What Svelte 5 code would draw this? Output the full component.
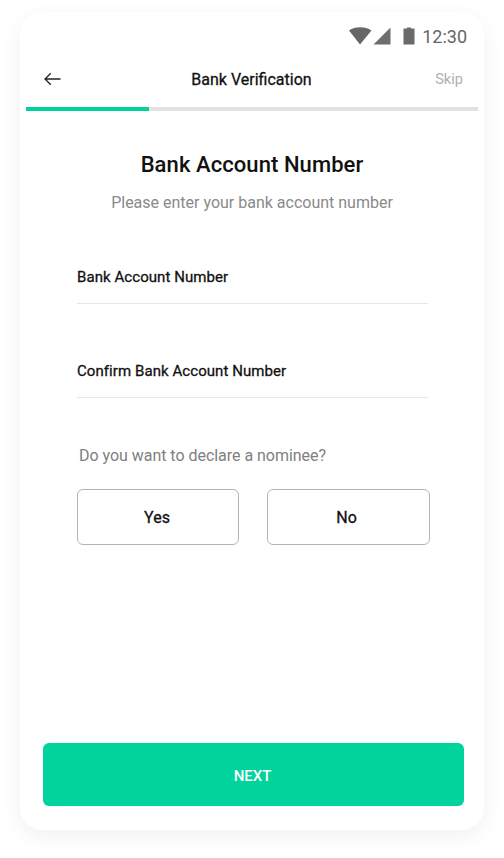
<script>
  const fields = ['Bank Account Number', 'Confirm Bank Account Number'];
</script>

<div class="page">
  <div class="card">
    <div class="status">
      <svg class="wifi" width="23" height="18" viewBox="0 0 23 18"><path d="M0 3.500C6-.7 16-.7 22.500 3.500L11 17.500Z" fill="#666"/></svg>
      <svg class="signal" width="18" height="18" viewBox="0 0 18 18"><path d="M0.5 17.500L17.500 .5V17.500Z" fill="#6e6e6e"/></svg>
      <svg class="battery" width="12" height="18" viewBox="0 0 12 18"><path d="M4 1.500V.5H8V1.500H11.500V17.500H.5V1.500Z" fill="#6a6a6a"/></svg>
      <span class="time">12:30</span>
    </div>
    <div class="nav">
      <svg class="back" width="17" height="14" viewBox="0 0 17 14"><path d="M16.500 7H1M6.800 1.200L1 7L6.800 12.800" fill="none" stroke="#222" stroke-width="1.300"/></svg>
      <span class="title">Bank Verification</span>
      <span class="skip">Skip</span>
    </div>
    <div class="track"><div class="fill"></div></div>
    <div class="body">
      <h1>Bank Account Number</h1>
      <p class="sub">Please enter your bank account number</p>
      {#each fields as f}
        <div class="field">{f}</div>
      {/each}
      <p class="q">Do you want to declare a nominee?</p>
      <div class="choices">
        <button class="yes">Yes</button>
        <button class="no">No</button>
      </div>
    </div>
    <button class="next">NEXT</button>
  </div>
</div>

<style>
  :global(body) { margin: 0; background: #fff; }
  .page {
    width: 504px; height: 858px; box-sizing: border-box; padding: 12px 20px 28px;
    font-family: Roboto, "Liberation Sans", sans-serif; overflow: hidden;
  }
  .card {
    height: 818px; box-sizing: border-box; background: #fff; border-radius: 22px;
    box-shadow: 0 6px 22px rgba(0,0,0,.06); display: flex; flex-direction: column;
    padding: 0 0 24px;
  }
  .status { display: flex; align-items: center; justify-content: flex-end; height: 48px; padding: 0 17px 0 0; box-sizing: border-box; }
  .wifi { margin-right: 1px; margin-top: -1px; }
  .signal { margin-right: 12px; margin-top: -1px; }
  .battery { margin-right: 7px; margin-top: -1px; }
  .time { font-size: 18px; color: #666; margin-top: 1px; }
  .nav { display: grid; grid-template-columns: 1fr auto 1fr; align-items: center; height: 38px; padding: 0 21px 0 20px; }
  .title { font-size: 16px; font-weight: 400; -webkit-text-stroke: .3px #111; color: #111; text-align: center; }
  .skip { font-size: 14.600px; color: #b0b0b0; justify-self: end; }
  .back { justify-self: start; margin-left: 4px; }
  .track { height: 4px; margin: 9px 6px 0; background: #e2e2e2; }
  .fill { width: 123px; height: 4px; background: #00d39b; }
  .body { flex: 1; display: flex; flex-direction: column; padding: 0 57px; }
  h1 { margin: 40px 0 0; font-size: 22px; line-height: 28px; font-weight: 500; color: #111; text-align: center; letter-spacing: .08px; white-space: nowrap; }
  .sub { margin: 13px 0 0; font-size: 16px; line-height: 22px; color: #8a8a8a; text-align: center; white-space: nowrap; }
  .field { font-size: 15px; line-height: 20px; font-weight: 400; -webkit-text-stroke: .3px #111; letter-spacing: .07px; color: #111; height: 36px; border-bottom: 1px solid #e6e6e6; margin-top: 57px; margin-right: -1px; }
  .sub + .field { margin-top: 53px; }
  .q { margin: 47px 0 0 2px; font-size: 16px; line-height: 22px; color: #808080; white-space: nowrap; letter-spacing: -.03px; }
  .choices { display: flex; gap: 28px; margin-top: 22px; margin-right: -3px; }
  .choices button {
    height: 56px; box-sizing: border-box; background: #fff; border: 1px solid #b4b4b4;
    border-radius: 6px; font: 400 16px Roboto, sans-serif; -webkit-text-stroke: .3px #111; color: #111; padding: 0;
  }
  .yes { width: 162px; padding-right: 2px !important; }
  .no { width: 163px; padding-right: 4px !important; }
  .next {
    margin: 0 20px 0 23px; height: 63px; background: #00d39b; border: 0; border-radius: 6px; color: #fff;
    font: 500 15px Roboto, sans-serif; padding: 2px 2px 0 0;
  }
</style>
